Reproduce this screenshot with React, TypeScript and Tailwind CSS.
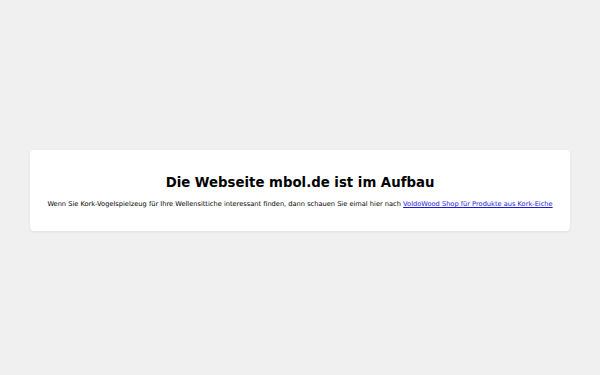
export default function App() {
  return (
    <div
      className="flex min-h-screen items-center justify-center bg-[#f0f0f0]"
      style={{ fontFamily: '"DejaVu Sans", sans-serif' }}
    >
      <div className="mt-[6px] w-[540px] rounded bg-white px-4 pt-[25px] pb-[22px] text-center shadow-[0_1px_3px_rgba(0,0,0,0.08)]">
        <h1 className="text-[13.3px] font-bold leading-[16px] text-black">
          Die Webseite mbol.de ist im Aufbau
        </h1>
        <p className="mt-[8px] whitespace-nowrap text-[6.65px] leading-[10px] text-black">
          Wenn Sie Kork-Vogelspielzeug für Ihre Wellensittiche interessant finden, dann schauen Sie eimal hier nach{' '}
          <a href="#" className="text-[#1a1ad8] underline">
            VoldoWood Shop für Produkte aus Kork-Eiche
          </a>
        </p>
      </div>
    </div>
  )
}
